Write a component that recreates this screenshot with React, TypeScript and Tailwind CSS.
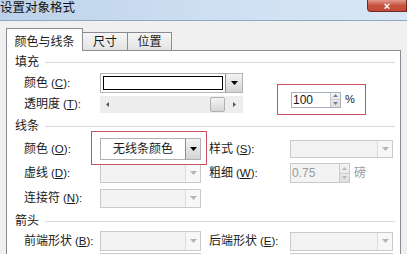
import React from 'react'

// 设置对象格式 dialog, "颜色与线条" tab

const font = "font-['Liberation_Sans','Noto_Sans_CJK_SC',sans-serif]"

function Label({ text, k }: { text: string; k: string }) {
  return (
    <span className="whitespace-nowrap">
      {text}
      <span className="ml-[3px] text-[11.5px]">
        (<span className="underline">{k}</span>):
      </span>
    </span>
  )
}

function Down({ color }: { color: string }) {
  return (
    <svg width="7" height="4" viewBox="0 0 7 4">
      <path d="M0 0h7L3.5 4z" fill={color} />
    </svg>
  )
}

function DisabledSelect({ w, h = 19 }: { w: number; h?: number }) {
  return (
    <div
      className="flex border border-[#c9c9c9] bg-[#f3f3f3]"
      style={{ width: w, height: h }}
    >
      <div className="flex-1" />
      <div className="flex w-[15px] items-center justify-center border-l border-[#dcdcdc] bg-[#f7f7f7]">
        <Down color="#b4b4b4" />
      </div>
    </div>
  )
}

function Spin({ disabled }: { disabled?: boolean }) {
  const c = disabled ? '#b8b8b8' : '#6f7f99'
  return (
    <div className="flex w-[10px] flex-col border-l border-[#c8c8c8] bg-gradient-to-b from-[#f4f4f4] to-[#dedede]">
      <div className="flex flex-1 items-center justify-center border-b border-[#cfcfcf]">
        <svg width="5" height="3" viewBox="0 0 5 3">
          <path d="M0 3h5L2.5 0z" fill={c} />
        </svg>
      </div>
      <div className="flex flex-1 items-center justify-center">
        <svg width="5" height="3" viewBox="0 0 5 3">
          <path d="M0 0h5L2.5 3z" fill={c} />
        </svg>
      </div>
    </div>
  )
}

function Section({ title, h }: { title: string; h: number }) {
  return (
    <div className="flex items-center pl-[8px] pr-[5px]" style={{ height: h }}>
      <span>{title}</span>
      <div className="ml-[6px] h-px flex-1 bg-[#d5dde3]" />
    </div>
  )
}

export default function App() {
  return (
    <div className={`relative h-[254px] w-[407px] overflow-hidden bg-[#f0f0f0] text-[12px] text-[#1a1a1a] ${font}`}>
      {/* title bar */}
      <div className="flex h-[21px] items-start justify-between border-b border-[#8fa8c2] bg-gradient-to-r from-[#bcd1e9] via-[#cddff2] to-[#d9e7f5]">
        <span className="pt-[1px] text-[12.5px] leading-[14px] text-[#111]">设置对象格式</span>
        <div className="flex h-[12px] w-[40px] items-end justify-center rounded-bl-[4px] border border-t-0 border-[#6e2b28] bg-gradient-to-b from-[#e19a8c] via-[#c7533f] to-[#c44a38]">
          <span className="text-[11px] font-bold leading-[10px] text-white">×</span>
        </div>
      </div>

      <div className="px-[6px] pt-[7px]">
        {/* tabs */}
        <div className="flex h-[22px] items-end">
          <div className="relative z-10 -mb-px flex h-[23px] w-[77px] items-center justify-center border border-b-0 border-[#898c95] bg-white pt-[3px]">
            颜色与线条
          </div>
          <div className="flex h-[18px] w-[45px] items-center justify-center border border-b-0 border-l-0 border-[#898c95] bg-gradient-to-b from-[#f5f5f5] to-[#e4e4e4] pt-[1px]">
            尺寸
          </div>
          <div className="flex h-[18px] w-[44px] items-center justify-center border border-b-0 border-l-0 border-[#898c95] bg-gradient-to-b from-[#f5f5f5] to-[#e4e4e4] pt-[1px]">
            位置
          </div>
        </div>

        {/* panel */}
        <div className="h-[220px] border border-[#898c95] bg-white">
          <Section title="填充" h={22} />
          <div className="flex pl-[17px]">
            <div className="flex flex-col">
              <div className="flex h-[21px] items-start">
                <div className="flex h-[20px] w-[76px] items-center">
                  <Label text="颜色" k="C" />
                </div>
                <div className="flex h-[20px] w-[143px] border border-[#b3b3b3]">
                  <div className="flex-1 p-[2px]">
                    <div className="h-full border-[1.5px] border-black bg-white" />
                  </div>
                  <div className="flex w-[17px] items-center justify-center border-l border-[#8c8c8c] bg-gradient-to-b from-[#f3f3f3] to-[#d4d4d4]">
                    <Down color="#000" />
                  </div>
                </div>
              </div>
              <div className="flex h-[21px] items-center">
                <div className="w-[76px]">
                  <Label text="透明度" k="T" />
                </div>
                <div className="flex h-[17px] w-[143px] items-center bg-[#ededed]">
                  <svg className="ml-[6px]" width="3" height="5" viewBox="0 0 3 5">
                    <path d="M3 0v5L0 2.5z" fill="#555" />
                  </svg>
                  <div className="flex-1" />
                  <div className="h-[15px] w-[15px] rounded-[2px] border border-[#b0b0b0] bg-gradient-to-b from-[#f4f4f4] to-[#d6d6d6]" />
                  <svg className="ml-[8px] mr-[7px]" width="3" height="5" viewBox="0 0 3 5">
                    <path d="M0 0v5L3 2.5z" fill="#555" />
                  </svg>
                </div>
              </div>
            </div>
            <div className="ml-[34px] mt-[11px] flex h-[31px] w-[89px] items-center border-[1.5px] border-[#c9505f] pl-[13px]">
              <div className="flex h-[16px] w-[50px] border border-[#a9b3bf] bg-white">
                <span className="flex-1 pl-[1px] leading-[14px]">100</span>
                <Spin />
              </div>
              <span className="ml-[4px] text-[11px]">%</span>
            </div>
          </div>

          <Section title="线条" h={22} />
          <div className="flex h-[24px] items-center pl-[17px]">
            <div className="w-[76px]">
              <Label text="颜色" k="O" />
            </div>
            <div className="relative flex h-[22px] w-[101px] border border-[#b0b0b0] bg-white">
              <span className="flex flex-1 items-center justify-center">无线条颜色</span>
              <div className="flex w-[15px] items-center justify-center border-l border-[#8c8c8c] bg-gradient-to-b from-[#f3f3f3] to-[#d4d4d4]">
                <Down color="#000" />
              </div>
              <span className="pointer-events-none absolute -bottom-[6px] -left-[10px] -right-[7px] -top-[8px] border-[1.5px] border-[#c9505f]" />
            </div>
            <div className="ml-[8px] w-[81px]">
              <Label text="样式" k="S" />
            </div>
            <DisabledSelect w={103} h={18} />
          </div>

          <div className="flex h-[24px] items-center pl-[17px]">
            <div className="w-[76px]">
              <Label text="虚线" k="D" />
            </div>
            <DisabledSelect w={101} />
            <div className="ml-[8px] w-[81px]">
              <Label text="粗细" k="W" />
            </div>
            <div className="flex h-[20px] w-[60px] border border-[#c9c9c9] bg-[#f3f3f3]">
              <span className="flex flex-1 items-center pl-[1px] text-[#9a9a9a]">0.75</span>
              <Spin disabled />
            </div>
            <span className="ml-[4px] text-[#9a9a9a]">磅</span>
          </div>

          <div className="flex h-[26px] items-center pl-[17px]">
            <div className="w-[76px]">
              <Label text="连接符" k="N" />
            </div>
            <DisabledSelect w={101} />
          </div>

          <Section title="箭头" h={20} />
          <div className="flex h-[20px] items-center pl-[17px]">
            <div className="w-[76px]">
              <Label text="前端形状" k="B" />
            </div>
            <DisabledSelect w={101} h={20} />
            <div className="ml-[8px] w-[81px]">
              <Label text="后端形状" k="E" />
            </div>
            <DisabledSelect w={103} />
          </div>
          <div className="mt-[2px] flex pl-[17px]">
            <div className="w-[76px]" />
            <DisabledSelect w={101} />
            <div className="ml-[8px] w-[81px]" />
            <DisabledSelect w={103} />
          </div>
        </div>
      </div>
    </div>
  )
}
